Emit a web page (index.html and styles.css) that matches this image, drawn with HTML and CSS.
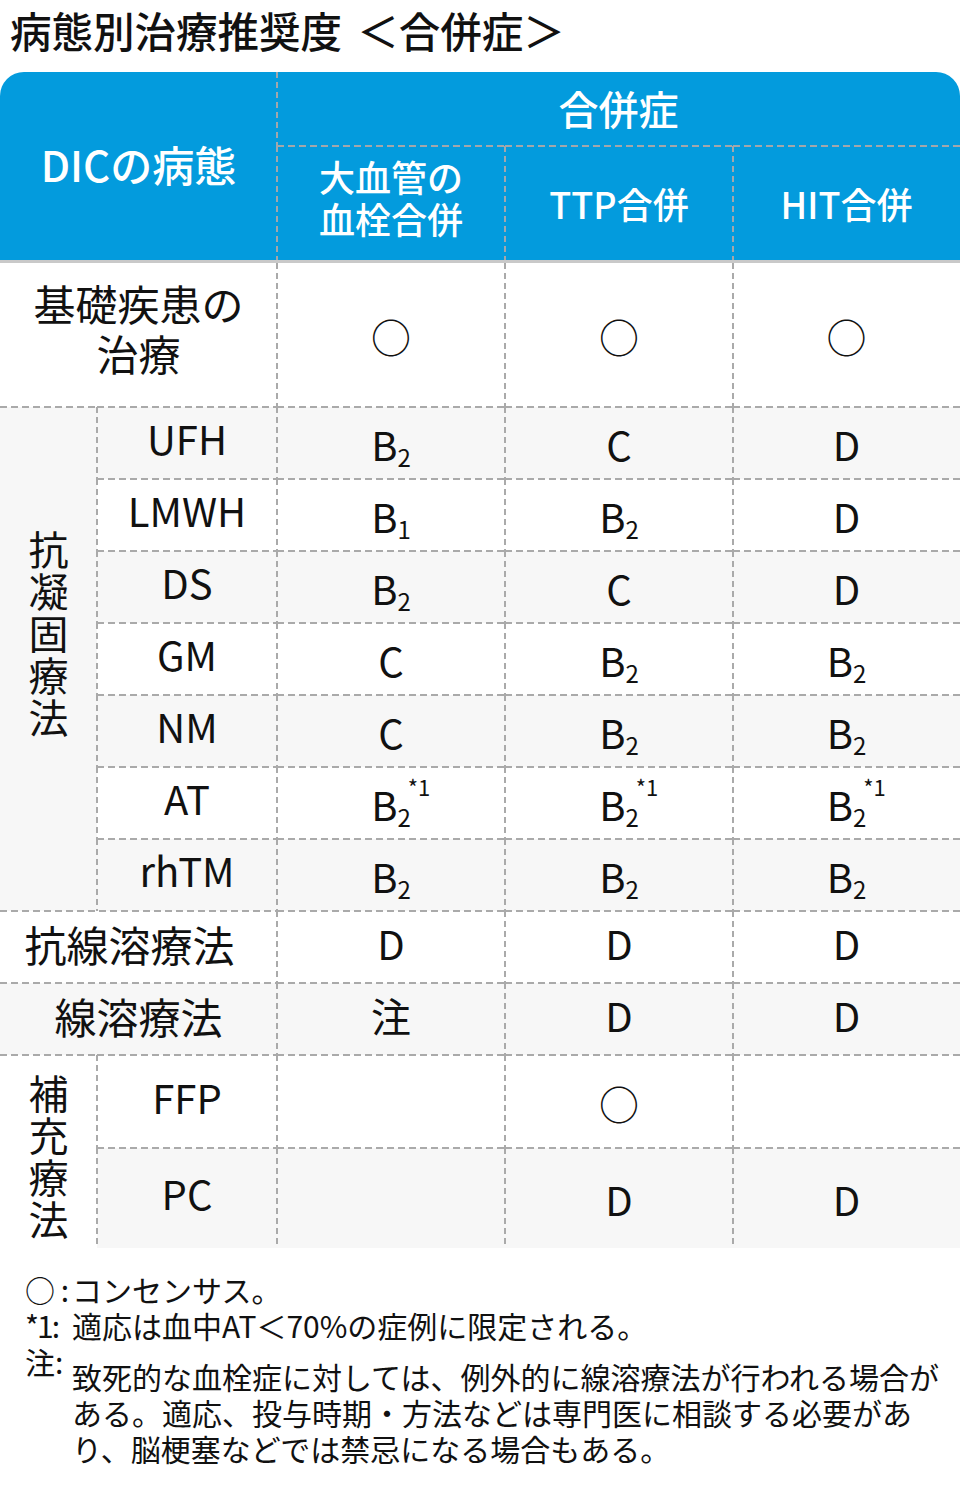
FILE: index.html
```html
<!DOCTYPE html>
<html lang="ja">
<head>
<meta charset="utf-8">
<title>病態別治療推奨度 ＜合併症＞</title>
<link rel="stylesheet" href="styles.css">
</head>
<body>
<h1 class="title">病態別治療推奨度 ＜合併症＞</h1>

<div class="head">
  <div class="hc dic">DICの病態</div>
  <div class="hc ll comp">合併症</div>
  <div class="hc ll lt c2 small">大血管の<br>血栓合併</div>
  <div class="hc ll lt c3 small">TTP合併</div>
  <div class="hc ll lt c4 small">HIT合併</div>
</div>

<div class="body">
  <!-- row 1 -->
  <div class="c r1 span2 lbl two">基礎疾患の<br>治療</div>
  <div class="c r1 ll val">○</div>
  <div class="c r1 ll val">○</div>
  <div class="c r1 ll val">○</div>

  <!-- anticoagulation group -->
  <div class="c lt grp g anti"><span class="vert">抗凝固療法</span></div>

  <div class="c lt ll g sub">UFH</div>
  <div class="c lt ll g val"><span class="v">B<sub>2</sub></span></div>
  <div class="c lt ll g val"><span class="v">C</span></div>
  <div class="c lt ll g val"><span class="v">D</span></div>

  <div class="c lt ll sub">LMWH</div>
  <div class="c lt ll val"><span class="v">B<sub>1</sub></span></div>
  <div class="c lt ll val"><span class="v">B<sub>2</sub></span></div>
  <div class="c lt ll val"><span class="v">D</span></div>

  <div class="c lt ll g sub">DS</div>
  <div class="c lt ll g val"><span class="v">B<sub>2</sub></span></div>
  <div class="c lt ll g val"><span class="v">C</span></div>
  <div class="c lt ll g val"><span class="v">D</span></div>

  <div class="c lt ll sub">GM</div>
  <div class="c lt ll val"><span class="v">C</span></div>
  <div class="c lt ll val"><span class="v">B<sub>2</sub></span></div>
  <div class="c lt ll val"><span class="v">B<sub>2</sub></span></div>

  <div class="c lt ll g sub">NM</div>
  <div class="c lt ll g val"><span class="v">C</span></div>
  <div class="c lt ll g val"><span class="v">B<sub>2</sub></span></div>
  <div class="c lt ll g val"><span class="v">B<sub>2</sub></span></div>

  <div class="c lt ll sub">AT</div>
  <div class="c lt ll val"><span class="v">B<sub>2</sub><sup>*1</sup></span></div>
  <div class="c lt ll val"><span class="v">B<sub>2</sub><sup>*1</sup></span></div>
  <div class="c lt ll val"><span class="v">B<sub>2</sub><sup>*1</sup></span></div>

  <div class="c lt ll g sub">rhTM</div>
  <div class="c lt ll g val"><span class="v">B<sub>2</sub></span></div>
  <div class="c lt ll g val"><span class="v">B<sub>2</sub></span></div>
  <div class="c lt ll g val"><span class="v">B<sub>2</sub></span></div>

  <!-- antifibrinolytic -->
  <div class="c lt span2 lbl anf">抗線溶療法</div>
  <div class="c lt ll val up"><span class="v">D</span></div>
  <div class="c lt ll val up"><span class="v">D</span></div>
  <div class="c lt ll val up"><span class="v">D</span></div>

  <!-- fibrinolytic -->
  <div class="c lt span2 g lbl">線溶療法</div>
  <div class="c lt ll g val up"><span class="v">注</span></div>
  <div class="c lt ll g val up"><span class="v">D</span></div>
  <div class="c lt ll g val up"><span class="v">D</span></div>

  <!-- replacement group -->
  <div class="c lt grp repl"><span class="vert">補充療法</span></div>

  <div class="c lt ll sub">FFP</div>
  <div class="c lt ll val"></div>
  <div class="c lt ll val">○</div>
  <div class="c lt ll val"></div>

  <div class="c lt ll g sub">PC</div>
  <div class="c lt ll g val"></div>
  <div class="c lt ll g val"><span class="v">D</span></div>
  <div class="c lt ll g val"><span class="v">D</span></div>
</div>

<div class="notes">
  <div class="note"><span class="nl">○ :</span><span class="nt">コンセンサス。</span></div>
  <div class="note"><span class="nl tight">*1:</span><span class="nt">適応は血中AT＜70%の症例に限定される。</span></div>
  <div class="note"><span class="nl">注:</span><span class="nt para">致死的な血栓症に対しては、例外的に線溶療法が行われる場合が<br>ある。適応、投与時期・方法などは専門医に相談する必要があ<br>り、脳梗塞などでは禁忌になる場合もある。</span></div>
</div>
</body>
</html>
```

FILE: styles.css
```css
* {
  box-sizing: border-box;
  margin: 0;
  padding: 0;
}

body {
  width: 960px;
  background: #ffffff;
  color: #111111;
  font-family: "Noto Sans CJK JP", "Noto Sans", sans-serif;
}

.title {
  height: 66px;
  line-height: 60px;
  padding-left: 10px;
  margin-bottom: 6px;
  font-size: 41.5px;
  font-weight: 500;
  word-spacing: 6px;
  white-space: nowrap;
}

/* ---------- dashed lines ---------- */
.lt::before {
  content: "";
  position: absolute;
  left: 0;
  right: 0;
  top: -1px;
  height: 2px;
  background: repeating-linear-gradient(90deg, var(--dc) 0 7px, transparent 7px 11px);
}

.ll::after {
  content: "";
  position: absolute;
  left: -1px;
  top: 0;
  bottom: 0;
  width: 2px;
  background: repeating-linear-gradient(180deg, var(--dc) 0 6px, transparent 6px 10px);
}

/* ---------- header ---------- */
.head {
  --dc: #a3a7ab;
  display: grid;
  grid-template-columns: 277px 228px 228px 227px;
  grid-template-rows: 74px 114px;
  background: #039bdd;
  border-radius: 24px 24px 0 0;
  border-bottom: 3px solid #c9c9c9;
  color: #ffffff;
  font-size: 40px;
  font-weight: 500;
  line-height: 42px;
}

.hc {
  position: relative;
  display: flex;
  align-items: center;
  justify-content: center;
  text-align: center;
}

.hc.small {
  font-size: 36px;
}

.dic {
  grid-column: 1;
  grid-row: 1 / 3;
  padding-bottom: 4px;
  font-size: 42px;
}

.comp {
  grid-column: 2 / 5;
  grid-row: 1;
  padding-bottom: 2px;
}

.c2 { grid-column: 2; grid-row: 2; padding-bottom: 12px; }
.c3 { grid-column: 3; grid-row: 2; }
.c4 { grid-column: 4; grid-row: 2; }

/* ---------- body ---------- */
.body {
  --dc: #aaaaaa;
  display: grid;
  grid-template-columns: 97px 180px 228px 228px 227px;
  grid-template-rows: 144px repeat(9, 72px) 93px 100px;
  font-size: 40px;
  line-height: 50px;
}

.c {
  position: relative;
  display: flex;
  align-items: center;
  justify-content: center;
  text-align: center;
  background: #ffffff;
}

.c.g {
  background: #f7f7f7;
}

.span2 {
  grid-column: 1 / 3;
}

.lbl {
  padding-bottom: 6px;
  font-size: 42px;
}

.lbl.two {
  padding-bottom: 14px;
}

.lbl.anf {
  padding-right: 18px;
}

.sub {
  grid-column: 2;
  padding-bottom: 10px;
}

.val {
  padding-top: 2px;
}

.val.up {
  padding-top: 0;
  padding-bottom: 8px;
}

.r1.val {
  padding-top: 2px;
}

.grp {
  grid-column: 1;
}

.anti {
  grid-row: 2 / 9;
  padding-bottom: 48px;
}

.repl {
  grid-row: 11 / 14;
  padding-top: 12px;
}

.vert {
  writing-mode: vertical-rl;
  text-orientation: upright;
  letter-spacing: 2px;
  line-height: 40px;
}

.v {
  position: relative;
  display: inline-block;
  white-space: nowrap;
}

.v sub {
  font-size: 24px;
  line-height: 0;
  vertical-align: -6px;
}

.v sup {
  position: absolute;
  left: calc(100% - 3px);
  top: -4px;
  font-size: 22px;
  line-height: 1;
}

/* ---------- notes ---------- */
.notes {
  padding: 23px 0 0 25px;
  font-size: 30px;
  line-height: 36px;
}

.note {
  display: flex;
  align-items: flex-start;
  white-space: nowrap;
}

.nl {
  flex: none;
  width: 47px;
  word-spacing: -1px;
}

.nl.tight {
  letter-spacing: -2px;
}

.para {
  padding-top: 15px;
}
```
